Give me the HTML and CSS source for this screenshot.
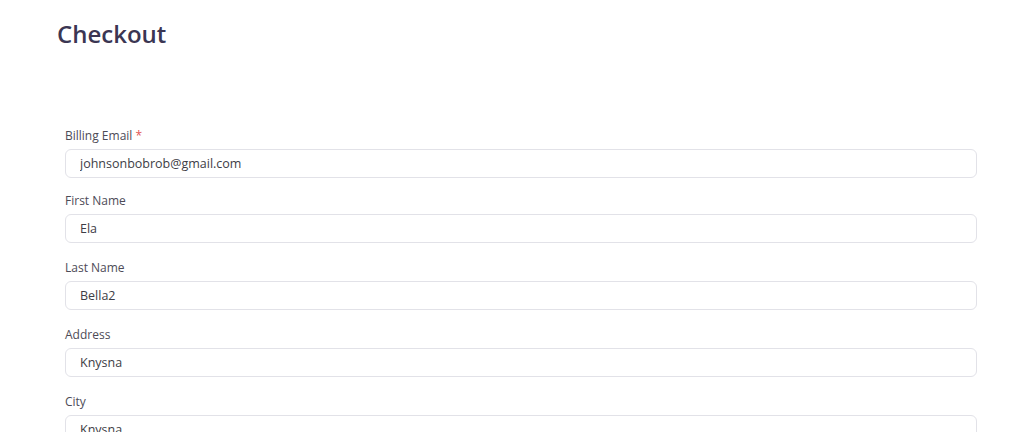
FILE: index.html
```html
<!DOCTYPE html>
<html lang="en">
<head>
    <meta charset="UTF-8">
    <meta name="viewport" content="width=device-width, initial-scale=1.0">
    <title>Checkout</title>
    <link rel="stylesheet" href="styles.css">
</head>
<body>
    <div class="page">
        <h1 class="title">Checkout</h1>
        <form class="checkout-form">
            <div class="field">
                <label class="field-label" for="email">Billing Email <span class="req">*</span></label>
                <input class="field-input" id="email" type="text" value="johnsonbobrob@gmail.com">
            </div>
            <div class="field">
                <label class="field-label" for="first">First Name</label>
                <input class="field-input" id="first" type="text" value="Ela">
            </div>
            <div class="field">
                <label class="field-label" for="last">Last Name</label>
                <input class="field-input" id="last" type="text" value="Bella2">
            </div>
            <div class="field">
                <label class="field-label" for="address">Address</label>
                <input class="field-input" id="address" type="text" value="Knysna">
            </div>
            <div class="field">
                <label class="field-label" for="city">City</label>
                <input class="field-input" id="city" type="text" value="Knysna">
            </div>
        </form>
    </div>
</body>
</html>
```
FILE: styles.css
```css
*{margin:0;padding:0;box-sizing:border-box;}
html,body{width:100%;height:100%;background:#fff;}
body{font-family:"Open Sans","Liberation Sans",sans-serif;color:#3a3a3a;}

.page{padding:0 47px 0 57px;}
.title{
    font-size:24px;
    font-weight:600;
    color:#3b3653;
    line-height:32px;
    padding-top:18px;
}
.checkout-form{
    margin-left:8px;
    margin-top:77px;
}
.field{
    display:flex;
    flex-direction:column;
    margin-bottom:16px;
}
.field:first-child{margin-bottom:14px;}
.field-label{
    font-size:12px;
    font-weight:500;
    line-height:18px;
    color:#4d4b57;
    margin-bottom:4px;
}
.field-label .req{color:#e25555;}
.field-input{
    height:29px;
    border:1px solid #e2e2e8;
    border-radius:6px;
    padding:0 14px;
    font-family:inherit;
    font-size:12.5px;
    color:#3d3d45;
    outline:none;
    background:#fff;
}
```
